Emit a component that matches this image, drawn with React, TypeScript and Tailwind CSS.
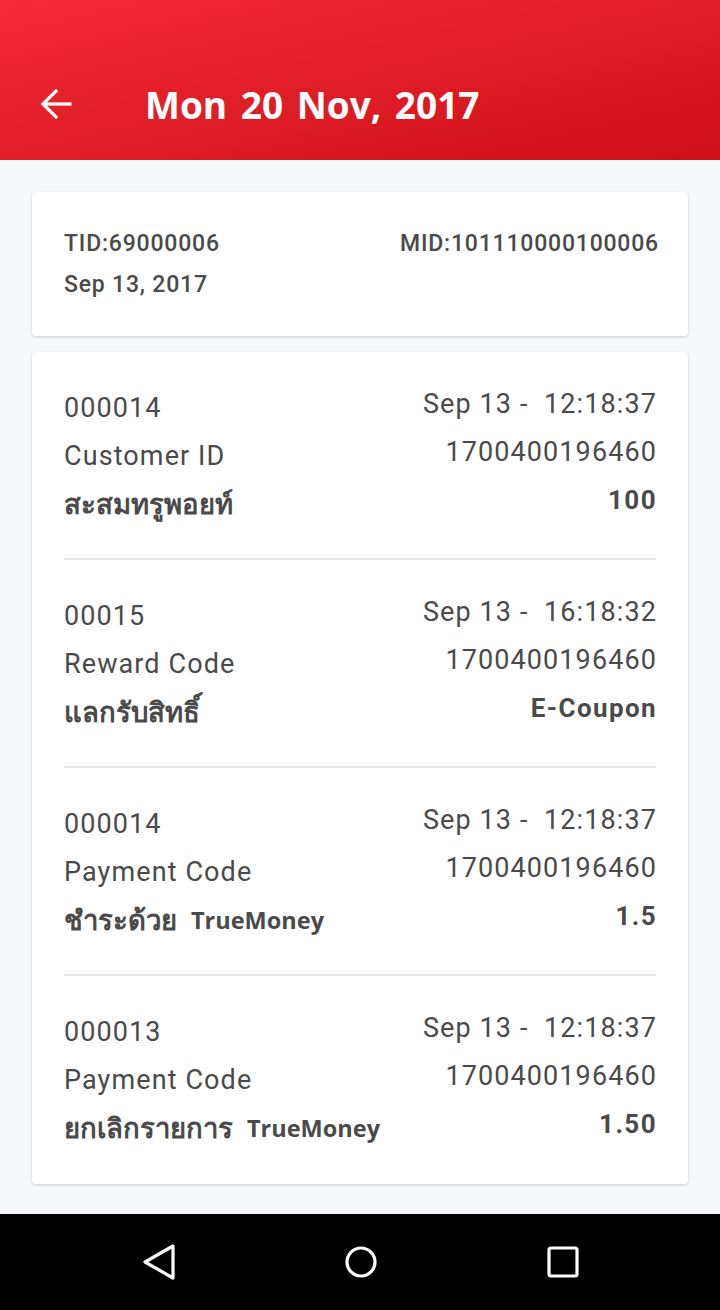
type Txn = {
  no: string;
  time: string;
  kind: string;
  code: string;
  label: string;
  brand?: string;
  value: string;
};

const TXNS: Txn[] = [
  { no: "000014", time: "Sep 13 -  12:18:37", kind: "Customer ID", code: "1700400196460", label: "สะสมทรูพอยท์", value: "100" },
  { no: "00015", time: "Sep 13 -  16:18:32", kind: "Reward Code", code: "1700400196460", label: "แลกรับสิทธิ์", value: "E-Coupon" },
  { no: "000014", time: "Sep 13 -  12:18:37", kind: "Payment Code", code: "1700400196460", label: "ชำระด้วย", brand: "TrueMoney", value: "1.5" },
  { no: "000013", time: "Sep 13 -  12:18:37", kind: "Payment Code", code: "1700400196460", label: "ยกเลิกรายการ", brand: "TrueMoney", value: "1.50" },
];

const line = "h-12 whitespace-pre text-[27px] leading-[48px] tracking-[1.1px] font-['Roboto',sans-serif]";

function TxnRow({ t, last }: { t: Txn; last: boolean }) {
  return (
    <div className={`mx-8 pt-7 ${last ? "pb-8" : "pb-[30px] border-b-2 border-[#e4e4e4]"}`}>
      <div className="flex justify-between text-[#4a4a4a]">
        {/* left column sits a few px lower than the right one */}
        <div className="flex flex-col pt-1">
          <span className={line}>{t.no}</span>
          <span className={line}>{t.kind}</span>
          <div className="flex h-12 items-center gap-[14px] font-bold font-['Open_Sans','Noto_Sans',sans-serif]">
            <span className="text-[27.5px] leading-[48px]">{t.label}</span>
            {t.brand && <span className="text-[23.5px] leading-[48px]">{t.brand}</span>}
          </div>
        </div>
        <div className="-mr-[1px] flex flex-col items-end">
          <span className={line}>{t.time}</span>
          <span className={line}>{t.code}</span>
          <span className="h-12 text-[26px] leading-[48px] font-bold tracking-[1.4px] font-['Roboto',sans-serif]">{t.value}</span>
        </div>
      </div>
    </div>
  );
}

export default function App() {
  return (
    <div className="flex h-[1310px] w-[720px] flex-col bg-[#f6f7f9]">
      {/* app bar (status bar area included) */}
      <header className="flex h-40 shrink-0 items-center bg-gradient-to-br from-[#f42a36] to-[#cc0e16] pl-10 pt-12">
        <svg width="32" height="32" viewBox="0 0 32 32" fill="none" stroke="white" strokeWidth="3.2" strokeLinecap="square">
          <path d="M30 16 H4" />
          <path d="M16 3 L3 16 L16 29" />
        </svg>
        <h1 className="ml-[73px] text-[37px] font-bold leading-none text-white [word-spacing:4px] font-['Open_Sans',sans-serif]">
          Mon 20 Nov, 2017
        </h1>
      </header>

      <main className="flex flex-1 flex-col gap-4 px-8 pt-8">
        {/* terminal info */}
        <section className="flex h-36 flex-col justify-center rounded bg-white px-8 shadow-[0_1px_3px_rgba(0,0,0,0.18)]">
          <div className="flex justify-between text-[23px] font-medium leading-[41px] tracking-[0.8px] text-[#4a4a4a] font-['Roboto',sans-serif]">
            <span>TID:69000006</span>
            <span className="-mr-[3px]">MID:101110000100006</span>
          </div>
          <div className="text-[23px] font-medium leading-[41px] tracking-[0.8px] text-[#4a4a4a] font-['Roboto',sans-serif]">
            Sep 13, 2017
          </div>
        </section>

        {/* transactions */}
        <section className="rounded bg-white shadow-[0_1px_3px_rgba(0,0,0,0.18)]">
          {TXNS.map((t, i) => (
            <TxnRow key={i} t={t} last={i === TXNS.length - 1} />
          ))}
        </section>
      </main>

      {/* system nav */}
      <nav className="flex h-24 shrink-0 items-center gap-[170px] bg-black pl-[143px]">
        <svg width="32" height="36" viewBox="0 0 32 36" fill="none" stroke="white" strokeWidth="3.2" strokeLinejoin="round">
          <path d="M30 2 L2 18 L30 34 Z" />
        </svg>
        <svg width="32" height="32" viewBox="0 0 32 32" fill="none" stroke="white" strokeWidth="3.2">
          <circle cx="16" cy="16" r="14" />
        </svg>
        <svg width="32" height="32" viewBox="0 0 32 32" fill="none" stroke="white" strokeWidth="3.2">
          <rect x="2" y="2" width="28" height="28" rx="2" />
        </svg>
      </nav>
    </div>
  );
}
